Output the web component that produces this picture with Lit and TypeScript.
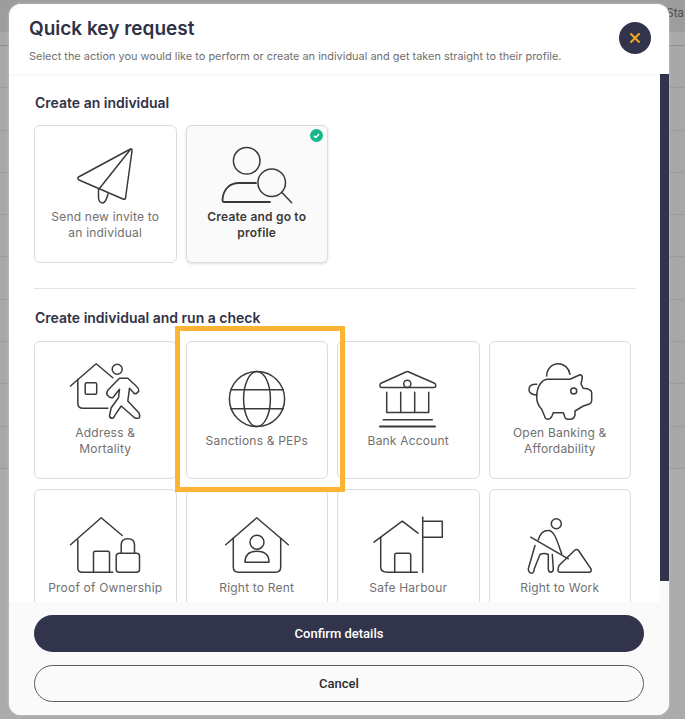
import { html, svg, LitElement, css } from 'lit';
import { customElement } from 'lit/decorators.js';

const icons = {
  plane: svg`
    <path d="M65.5 1 L13.5 29 Q12 31 14 32 L58 51 Q60 52 60.5 50 L67 3 Q67 0 65.5 1 Z" />
    <path d="M65 2 L34 41" />
    <path d="M33.5 41 V50 Q34 55 38 55 Q41 54 43 46" />`,
  profile: svg`
    <circle cx="29.7" cy="12.8" r="13.3" />
    <path d="M53 54 H7 Q5.5 54 5.5 52 C6 41 13 35 22 35 H39" stroke-width="1.8" />
    <circle cx="54.7" cy="34.8" r="13.8" />
    <path d="M64.7 44.2 L74.7 54.8" />`,
  address: svg`
    <path d="M5.5 22 L31.2 -0.3 L47.8 13.7" />
    <path d="M12.8 15.3 V39 Q12.8 44.3 18 44.3 H42.8" />
    <rect x="20.2" y="18.7" width="11.5" height="11.5" rx="1.5" />
    <circle cx="52.2" cy="5.3" r="5" />
    <path d="M54.5 14.3 L42.8 26.3 Q41 29.5 42.2 31 Q45 34.5 47.8 33.7 L54.5 25.3 L53.5 33.7 L46.2 43.7 L44.5 52 Q45 54.5 47.8 54.3 Q49.5 53 50.5 50.3 L56.2 42 L69.5 53.7 Q73 55 74.5 53.7 Q75 50.5 73.8 48.7 L62.8 37 L64.5 24.3 L69.5 29.7 Q72 30 73.8 27 Q73.5 24 71.2 22 L62.8 14.3 Z" />`,
  globe: svg`
    <circle cx="40" cy="27" r="27.6" />
    <ellipse cx="40" cy="27" rx="13.4" ry="27.6" />
    <path d="M13.9 17.8 H66.1 M13.9 36.8 H66.1" />`,
  bank: svg`
    <path d="M12 13 Q12 11.5 13.5 11 L38.5 -0.3 Q39.3 -0.6 40.2 -0.3 L66 11 Q67.7 11.5 67.7 13 V14 Q67.7 15.5 66 15.5 H13.5 Q12 15.5 12 14 Z" />
    <circle cx="39.3" cy="11.8" r="3.6" />
    <path d="M18.7 20.2 V40.5 H60.7 V20.2 M32.7 20.2 V40.5 M46.7 20.2 V40.5" />
    <path d="M15.3 47.8 H64.3" />
    <path d="M12 54.5 H67" stroke-width="2" />`,
  piggy: svg`
    <path d="M26.7 12 C26.7 5 32 -0.3 38.3 -0.3 C44 -0.3 49 4 50 10.3" />
    <path d="M28.3 15.3 H50 Q55 13 60 10.8 Q62.5 11 62.3 14 L61 20 L63.3 24.3 Q68 24.5 70 26 Q71.7 27 71.7 29 V36.5 Q71.7 39 69.5 40 L63.3 42 L55 47 V51 Q54 55.3 50 55.3 H47.5 Q45 55 44.5 52 L43.3 48.7 H33.3 L32 52 Q30.5 55.3 27.5 55.3 Q25 55 24.5 52 L21.7 45.3 Q16.7 40 16.7 33 C16.7 22 22 15.3 28.3 15.3 Z" />
    <path d="M16.7 20.3 Q9 20 9 25.5 Q9 30.5 16.7 31" />
    <circle cx="53.7" cy="27" r="3" />`,
  ownership: svg`
    <path d="M5.5 25.8 L36.2 -1.2 L57.2 16.5" />
    <path d="M12.8 20.8 V49 Q12.8 53.2 17 53.2 H47.8" />
    <path d="M28.5 53.2 V34 Q28.5 32.2 30.3 32.2 H42.7 Q44.5 32.2 44.5 34 V53.2" />
    <rect x="51.2" y="34.2" width="23.3" height="19" rx="3" />
    <path d="M56.2 34.2 V26 Q56.2 19.8 62.8 19.8 Q69.5 19.8 69.5 26 V34.2" />`,
  rent: svg`
    <path d="M8.7 25.8 L39.7 -1.2 L71.3 25.8" />
    <path d="M16.3 19 V48 Q16.3 53.2 21.5 53.2 H58.5 Q63.7 53.2 63.7 48 V19" />
    <circle cx="40" cy="23.2" r="7" />
    <path d="M28 43.2 Q28 32.2 40 32.2 Q52 32.2 52 43.2 Z" />`,
  harbour: svg`
    <path d="M6 23.2 L34.3 2.2 L50 14.2" />
    <path d="M12.7 18.2 V48 Q12.7 53.2 19.3 53.2 H49.3" />
    <path d="M26.7 53.2 V36 Q26.7 34.2 28.5 34.2 H41 Q42.7 34.2 42.7 36 V53.2" />
    <path d="M54.7 -1.8 V53.2" />
    <path d="M54.7 2.2 H74.3 V18.2 H54.7" />`,
  work: svg`
    <circle cx="36.3" cy="4.8" r="5" />
    <path d="M10.7 18.2 L48.3 39.8" />
    <path d="M18.3 20.8 C20 14 24 11.5 28.3 11.5 C35 11.5 38 25 41.7 34.8" />
    <path d="M39 46.5 L54.5 31.5 Q56.7 29.5 58.5 31.5 L71 49.8 Q72 53.2 69 53.2 H40 Q36.5 53.2 39 46.5 Z" />
    <path d="M15 26.5 L8.3 49.8 Q8.5 54.2 11.7 54.2 Q14 54 14.3 49.8 L20 35.5 Q24 33.5 28.3 35.5 V50 Q28.5 53.2 31 53.2 Q33.3 53 33.3 49.8 L32.3 35.5" />`,
};

type Option = { label: string; icon: keyof typeof icons; selected?: boolean };

const createOptions: Option[] = [
  { label: 'Send new invite to\nan individual', icon: 'plane' },
  { label: 'Create and go to\nprofile', icon: 'profile', selected: true },
];

const checkOptions: Option[] = [
  { label: 'Address &\nMortality', icon: 'address' },
  { label: 'Sanctions & PEPs', icon: 'globe' },
  { label: 'Bank Account', icon: 'bank' },
  { label: 'Open Banking &\nAffordability', icon: 'piggy' },
  { label: 'Proof of Ownership', icon: 'ownership' },
  { label: 'Right to Rent', icon: 'rent' },
  { label: 'Safe Harbour', icon: 'harbour' },
  { label: 'Right to Work', icon: 'work' },
];

@customElement('app-root')
export class AppRoot extends LitElement {
  static styles = css`
    :host {
      display: block;
      position: relative;
      width: 685px;
      height: 719px;
      overflow: hidden;
      background: #ababab;
      font-family: Inter, 'Liberation Sans', sans-serif;
    }

    /* page behind the dialog */
    .backdrop-head {
      height: 32px;
      background: #9d9d9d;
      border-bottom: 1px solid #a0a0a0;
      box-sizing: border-box;
      display: flex;
      justify-content: flex-end;
      padding-right: 1px;
      font-size: 11.5px;
      line-height: 26px;
      color: #4c4d55;
    }

    .backdrop-sub {
      height: 14px;
      background: #a9a9a9;
      border-bottom: 1px solid #8f8f8f;
      box-sizing: border-box;
    }

    .backdrop-row {
      height: 42.3px;
      box-sizing: border-box;
      background: #a8a8a8;
      border-bottom: 1px solid #9b9b9b;
    }

    .backdrop-row:first-of-type {
      border-bottom-color: #8f8f8f;
    }

    .modal {
      position: absolute;
      left: 9px;
      top: 4px;
      width: 660px;
      height: 711px;
      display: flex;
      flex-direction: column;
      background: #fff;
      border-radius: 12px;
      overflow: hidden;
      box-shadow: 0 0 3px rgba(255, 255, 255, 0.4);
    }

    .header {
      height: 70px;
      flex: none;
      box-sizing: border-box;
      padding: 13px 20px 0;
      position: relative;
      z-index: 1;
      background: #fff;
      box-shadow: 0 1px 4px rgba(0, 0, 0, 0.06);
    }

    .title {
      margin: 0;
      font-size: 19px;
      line-height: 24px;
      font-weight: 600;
      color: #2f3246;
    }

    .subtitle {
      margin: 7px 0 0;
      font-size: 10.95px;
      line-height: 16px;
      color: #6f6f6f;
    }

    .close {
      position: absolute;
      right: 18px;
      top: 18px;
      width: 32px;
      height: 32px;
      border: none;
      border-radius: 50%;
      background: #31344a;
      display: flex;
      align-items: center;
      justify-content: center;
      padding: 0;
    }

    .body {
      flex: 1;
      min-height: 0;
      display: flex;
      overflow: hidden;
    }

    .content {
      flex: 1;
      min-width: 0;
      box-sizing: border-box;
      padding: 20px 24px 0 25px;
      overflow: hidden;
    }

    .track {
      width: 9px;
      flex: none;
      background: #fafafa;
    }

    .thumb {
      height: 507px;
      background: #31344a;
    }

    h2 {
      margin: 0;
      padding-left: 1px;
      font-size: 14px;
      line-height: 18px;
      font-weight: 600;
      color: #2f3246;
    }

    .grid {
      display: grid;
      grid-template-columns: repeat(4, 142.5px);
      grid-auto-rows: 138px;
      gap: 9.5px 9px;
      margin-top: 13px;
    }

    .grid.checks {
      margin-top: 14px;
    }

    .card {
      position: relative;
      box-sizing: border-box;
      border: 1px solid #dcdcdc;
      border-radius: 6px;
      background: #fff;
      display: flex;
      flex-direction: column;
      align-items: center;
      justify-content: center;
      gap: 5px;
      padding: 0 10px;
      text-align: center;
      font-size: 12px;
      line-height: 16px;
      letter-spacing: 0.2px;
      color: #707070;
      white-space: pre-line;
    }

    .card.selected {
      background: #fafafa;
      color: #3a3a3a;
      font-weight: 600;
      box-shadow: 0 1px 3px rgba(0, 0, 0, 0.14);
    }

    .card svg.icon {
      width: 80px;
      height: 56px;
      flex: none;
      overflow: visible;
      fill: none;
      stroke: #3a3a3a;
      stroke-width: 1.5;
      stroke-linecap: round;
      stroke-linejoin: round;
    }

    .check {
      position: absolute;
      right: 4px;
      top: 3px;
      width: 13px;
      height: 13px;
    }

    hr {
      border: none;
      border-top: 1px solid #e4e4e4;
      margin: 25px 0 20px;
      width: 602px;
    }

    .footer {
      flex: none;
      height: 113px;
      box-sizing: border-box;
      background: #fafafa;
      padding: 13px 25px 0;
      display: flex;
      flex-direction: column;
      gap: 13px;
    }

    .btn {
      height: 37px;
      border-radius: 19px;
      font-family: Roboto, 'Liberation Sans', sans-serif;
      font-size: 13px;
      font-weight: 500;
      padding: 0 0 1px;
    }

    .btn.primary {
      background: #31344a;
      border: none;
      color: #fff;
    }

    .btn.secondary {
      background: #fafafa;
      border: 1px solid #5c5c5c;
      color: #2b2b33;
    }

    .highlight {
      position: absolute;
      left: 175px;
      top: 326px;
      width: 170px;
      height: 166px;
      box-sizing: border-box;
      border: 5px solid #fdb433;
      pointer-events: none;
    }
  `;

  renderCard(option: Option) {
    return html`
      <div class="card ${option.selected ? 'selected' : ''}">
        ${option.selected
          ? html`<svg class="check" viewBox="0 0 13 13">
              <circle cx="6.5" cy="6.5" r="6.5" fill="#14b88a" />
              <path d="M3.8 6.7 L5.7 8.5 L9.2 4.9" fill="none" stroke="#fff" stroke-width="1.4" />
            </svg>`
          : ''}
        <svg class="icon" viewBox="0 0 80 56">${icons[option.icon]}</svg>
        <span>${option.label}</span>
      </div>
    `;
  }

  render() {
    return html`
      <div class="backdrop-head"><span>Sta</span></div>
      <div class="backdrop-sub"></div>
      ${Array.from({ length: 10 }, () => html`<div class="backdrop-row"></div>`)}

      <div class="modal">
        <div class="header">
          <h1 class="title">Quick key request</h1>
          <p class="subtitle">
            Select the action you would like to perform or create an individual and get taken straight to their profile.
          </p>
          <button class="close">
            <svg width="12" height="12" viewBox="0 0 12 12">
              <path d="M2 2 L10 10 M10 2 L2 10" stroke="#f5a623" stroke-width="2" stroke-linecap="round" />
            </svg>
          </button>
        </div>
        <div class="body">
          <div class="content">
            <h2>Create an individual</h2>
            <div class="grid">${createOptions.map((o) => this.renderCard(o))}</div>
            <hr />
            <h2>Create individual and run a check</h2>
            <div class="grid checks">${checkOptions.map((o) => this.renderCard(o))}</div>
          </div>
          <div class="track"><div class="thumb"></div></div>
        </div>
        <div class="footer">
          <button class="btn primary">Confirm details</button>
          <button class="btn secondary">Cancel</button>
        </div>
      </div>
      <div class="highlight"></div>
    `;
  }
}
